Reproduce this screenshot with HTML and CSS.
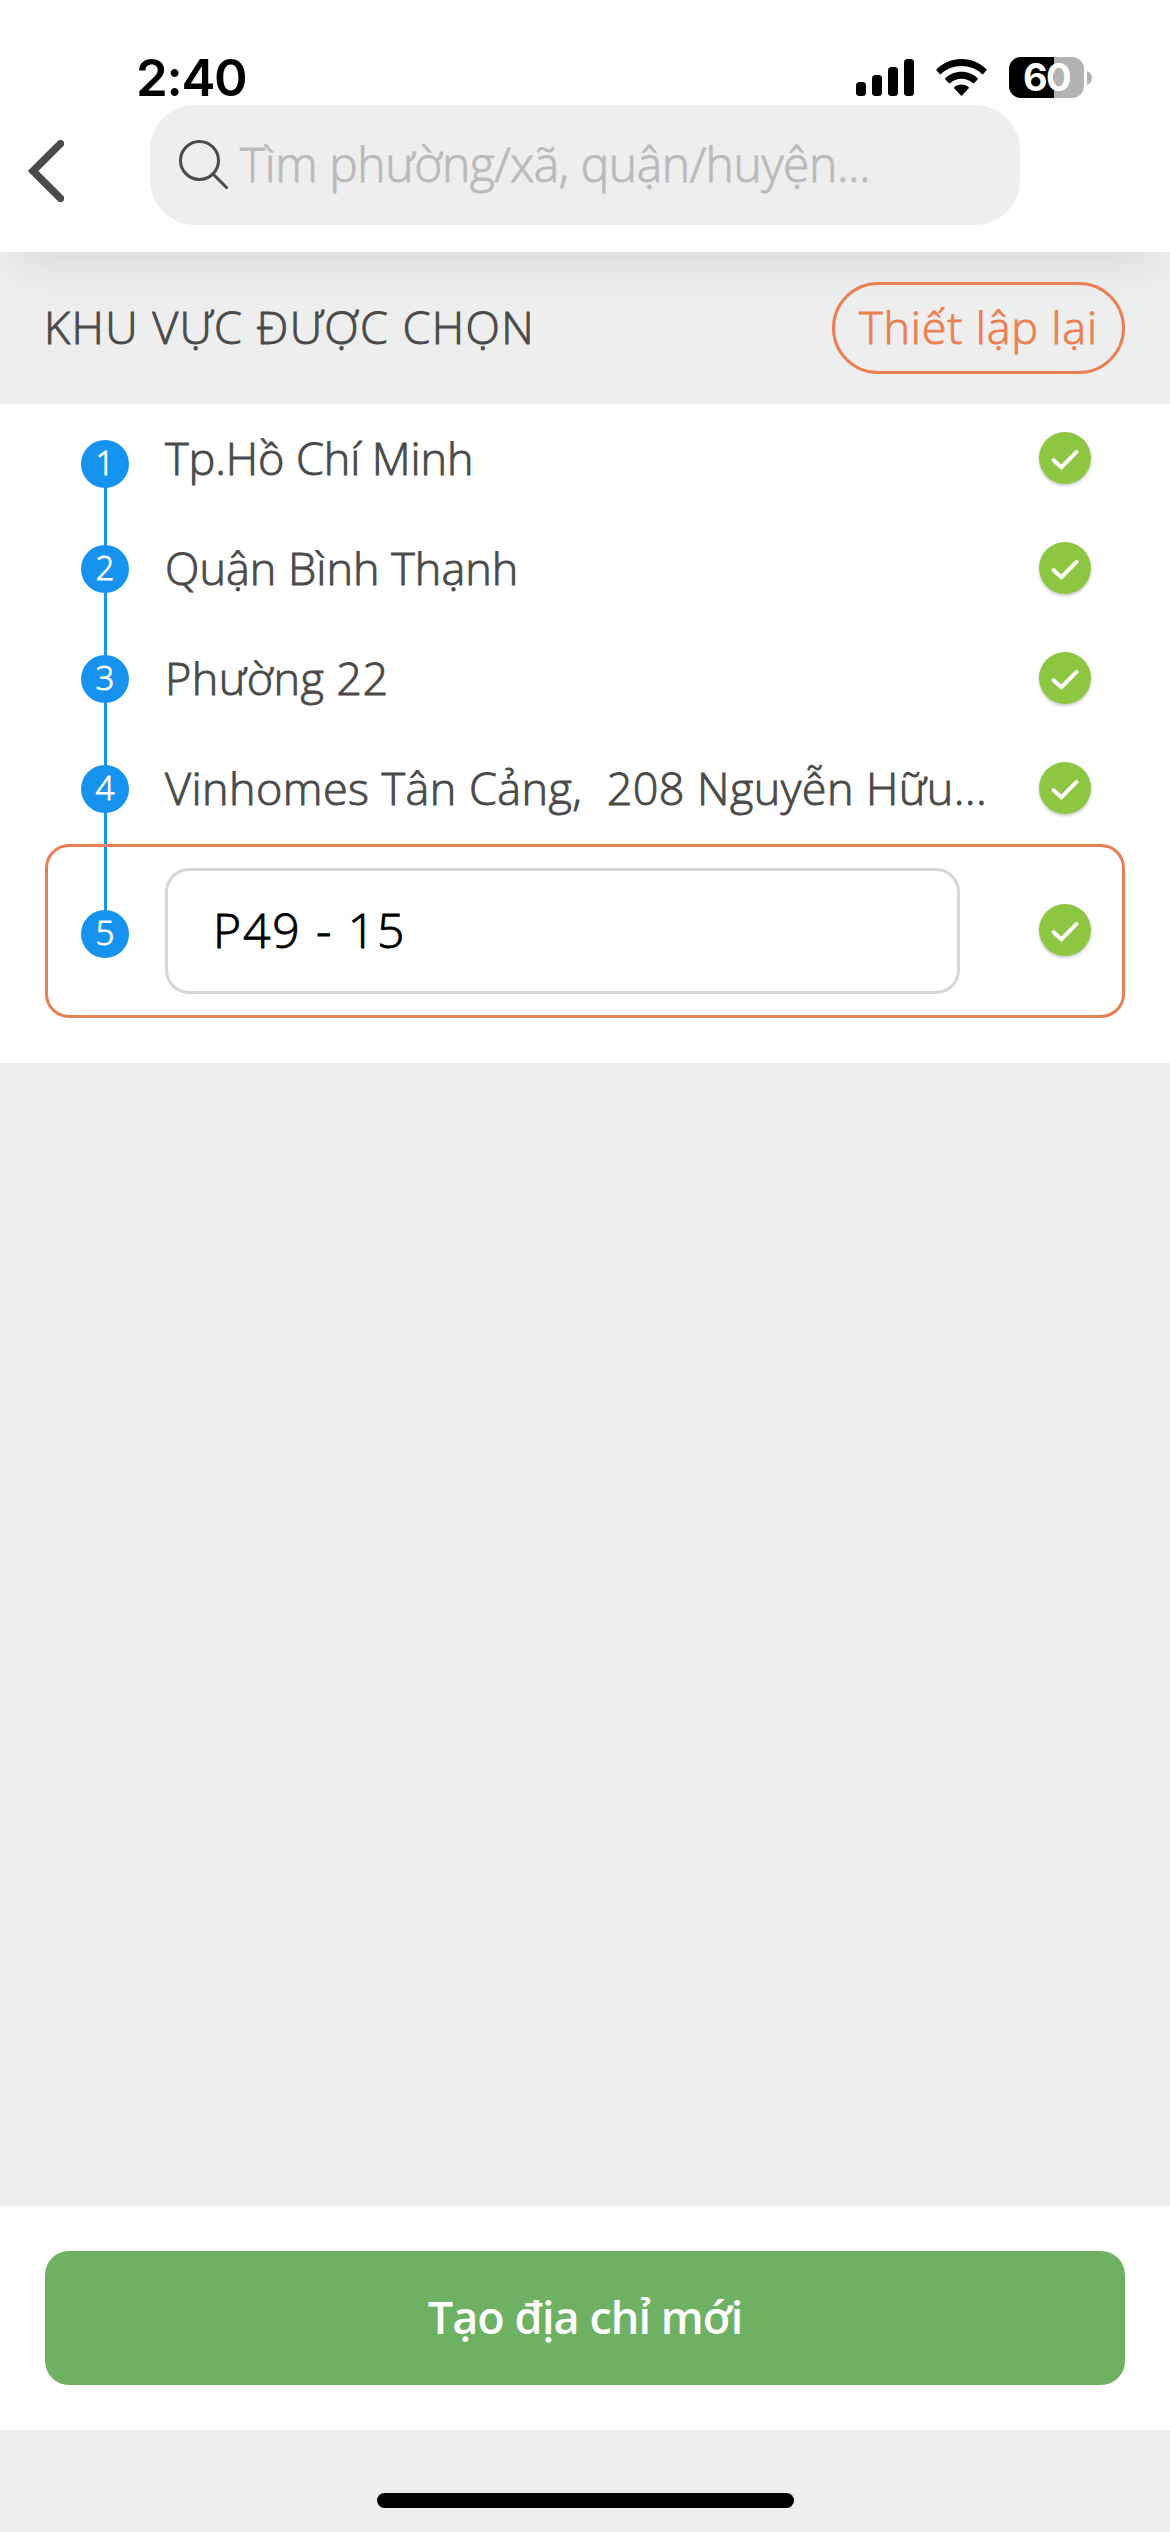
FILE: index.html
```html
<!DOCTYPE html>
<html lang="vi">
<head>
<meta charset="utf-8">
<title>Chọn khu vực</title>
<link rel="stylesheet" href="styles.css">
</head>
<body>
<svg class="sprite" aria-hidden="true">
  <symbol id="check" viewBox="0 0 52 52">
    <path d="M14.6 28.2L22.4 35.2L37.6 19.8" fill="none" stroke="#fff" stroke-width="4" stroke-linecap="round"/>
  </symbol>
</svg>
<div class="screen">
  <header class="header">
    <div class="status">
      <span class="time">2:40</span>
      <div class="indicators">
        <svg class="signal" viewBox="0 0 58 37">
          <rect x="0" y="23" width="10" height="14" rx="3.5"/>
          <rect x="16" y="16" width="10" height="21" rx="3.5"/>
          <rect x="32" y="8" width="10" height="29" rx="3.5"/>
          <rect x="48" y="0" width="10" height="37" rx="3.5"/>
        </svg>
        <svg class="wifi" viewBox="0 0 51 37">
          <path d="M25.5 0C35.3 0 44.2 3.800 50.400 10.200Q51 10.900 50.400 11.600L47.200 14.900Q46.500 15.500 45.800 14.900C40.500 9.800 33.300 7 25.500 7S10.500 9.800 5.200 14.900Q4.500 15.500 3.800 14.900L.6 11.600Q0 10.900 .6 10.200C6.800 3.800 15.700 0 25.500 0Z"/>
          <path d="M25.500 12.700C31.900 12.700 37.600 15.200 41.600 19.200Q42.300 19.900 41.600 20.600L38.200 24Q37.500 24.600 36.800 24C33.800 21.300 29.900 19.700 25.500 19.700S17.200 21.300 14.200 24Q13.500 24.600 12.800 24L9.400 20.600Q8.700 19.900 9.400 19.200C13.400 15.200 19.100 12.700 25.500 12.700Z"/>
          <path d="M25.500 25.400C28.300 25.400 30.800 26.400 32.600 28Q33.300 28.700 32.600 29.400L26.300 36.300Q25.500 37 24.700 36.300L18.400 29.400Q17.700 28.700 18.400 28C20.200 26.400 22.700 25.400 25.500 25.400Z"/>
        </svg>
        <div class="battery">
          <span class="charge">60</span>
          <svg class="tip" viewBox="0 0 5 14"><path d="M0 0Q5 2 5 7T0 14Z"/></svg>
        </div>
      </div>
    </div>
    <div class="nav">
      <svg class="back" viewBox="0 0 36 62"><path d="M32.500 3.700L5 31L32.500 58.300"/></svg>
      <div class="search">
        <svg class="lens" viewBox="0 0 50 50"><circle cx="20.500" cy="20.500" r="19"/><path d="M34 34L47.500 47.500"/></svg>
        <span class="placeholder">Tìm phường/xã, quận/huyện...</span>
      </div>
    </div>
  </header>

  <section class="heading">
    <h1 class="title">KHU VỰC ĐƯỢC CHỌN</h1>
    <button class="reset"><span>Thiết lập lại</span></button>
  </section>

  <main class="list">
    <div class="row row-first">
      <span class="step">1</span>
      <span class="name name-city">Tp.Hồ Chí Minh</span>
      <svg class="done"><use href="#check"/></svg>
    </div>
    <div class="row">
      <span class="step">2</span>
      <span class="name name-district">Quận Bình Thạnh</span>
      <svg class="done"><use href="#check"/></svg>
    </div>
    <div class="row">
      <span class="step">3</span>
      <span class="name">Phường 22</span>
      <svg class="done"><use href="#check"/></svg>
    </div>
    <div class="row">
      <span class="step">4</span>
      <span class="name">Vinhomes Tân Cảng,  208 Nguyễn Hữu...</span>
      <svg class="done"><use href="#check"/></svg>
    </div>
    <div class="row row-edit">
      <span class="step step-last">5</span>
      <div class="field"><span>P49 - 15</span></div>
      <svg class="done"><use href="#check"/></svg>
    </div>
  </main>

  <div class="space"></div>

  <footer class="footer">
    <button class="submit"><span>Tạo địa chỉ mới</span></button>
  </footer>
  <div class="home"><div class="home-bar"></div></div>
</div>
</body>
</html>
```
FILE: styles.css
```css
* { box-sizing: border-box; }

body {
  margin: 0;
  background: #eee;
  color: #4a4a4a;
  font-family: "Open Sans", "Noto Sans", sans-serif;
  font-size: 45px;
  font-weight: 300;
  line-height: 60px;
  -webkit-text-stroke: .9px currentColor;
}

button {
  font: inherit;
  background: none;
  cursor: pointer;
}

.sprite {
  position: absolute;
  width: 0;
  height: 0;
}

.screen {
  display: flex;
  flex-direction: column;
  width: 1170px;
  height: 2532px;
  overflow: hidden;
}

/* Header */
.header {
  flex: none;
  height: 252px;
  background: #fff;
  box-shadow: 0 30px 36px -15px rgba(0, 0, 0, .08);
}

.status {
  display: flex;
  align-items: center;
  justify-content: space-between;
  height: 105px;
  padding: 50px 78px 0 136px;
  -webkit-text-stroke: 0;
}

.time {
  color: #000;
  font: 600 51px/55px Inter, sans-serif;
  letter-spacing: -1.33px;
}

.indicators {
  display: flex;
  align-items: center;
}

.signal {
  width: 58px;
  height: 37px;
  margin-right: 22px;
}

.wifi {
  width: 51px;
  height: 37px;
  margin-right: 22px;
}

.battery {
  display: flex;
  align-items: center;
  gap: 3px;
  width: 83px;
}

.charge {
  width: 75px;
  height: 41px;
  border-radius: 12px;
  background: linear-gradient(90deg, #000 45px, #b3b3b3 45px);
  color: #fff;
  font: 700 38px/41px Inter, sans-serif;
  letter-spacing: -1.6px;
  text-align: center;
}

.tip {
  width: 5px;
  height: 14px;
  fill: #b3b3b3;
}

.nav {
  display: flex;
  align-items: flex-start;
  height: 147px;
  padding-left: 28px;
}

.back {
  width: 36px;
  height: 62px;
  margin: 35px 86px 0 0;
  fill: none;
  stroke: #4a4a4a;
  stroke-width: 7.500;
  stroke-linecap: round;
}

.search {
  display: flex;
  align-items: center;
  width: 870px;
  height: 120px;
  padding-left: 29px;
  border-radius: 45px;
  background: #eee;
}

.lens {
  width: 50px;
  height: 50px;
  margin-right: 11px;
  fill: none;
  stroke: #4a4a4a;
  stroke-width: 3;
  stroke-linecap: round;
}

.placeholder {
  padding-bottom: 3px;
  color: #bababa;
  font-size: 48px;
  letter-spacing: -.42px;
  white-space: nowrap;
}

/* Section heading */
.heading {
  display: flex;
  flex: none;
  align-items: center;
  justify-content: space-between;
  height: 152px;
  padding: 0 45px 0 44px;
}

.title {
  margin: 0;
  padding-bottom: 3px;
  font-size: 45px;
  font-weight: 300;
  letter-spacing: 1.4px;
}

.reset {
  display: flex;
  align-items: center;
  justify-content: center;
  width: 293px;
  height: 92px;
  padding: 0 0 3px;
  border: 3px solid #ec7f52;
  border-radius: 46px;
  color: #ec7f52;
  letter-spacing: .8px;
}

/* Selected areas */
.list {
  flex: none;
  padding: 0 45px 45px;
  background: #fff;
}

.row {
  position: relative;
  display: flex;
  align-items: center;
  height: 110px;
  padding: 0 34px 0 36px;
}

.step {
  flex: none;
  width: 48px;
  height: 48px;
  margin-right: 36px;
  border-radius: 50%;
  background: #1593ee;
  color: #fff;
  font-size: 33px;
  line-height: 46px;
  text-align: center;
}

.row-first .step { margin-top: 10px; }

/* Connector from each step down to the next one */
.row:not(.row-edit)::after {
  content: "";
  position: absolute;
  top: 78px;
  left: 59px;
  width: 3px;
  height: 70px;
  background: #1593ee;
}

.row:nth-child(4)::after { height: 32px; }

.row-edit::before {
  content: "";
  position: absolute;
  top: 0;
  left: 56px;
  width: 3px;
  height: 66px;
  background: #1593ee;
}

.name {
  flex: 1;
  padding-bottom: 3px;
  letter-spacing: .42px;
  white-space: pre;
}

.name-city { letter-spacing: -.11px; }
.name-district { letter-spacing: 0; }

.done {
  flex: none;
  width: 52px;
  height: 52px;
  margin-bottom: 2px;
  border-radius: 50%;
  background: #8dc641;
  box-shadow: 0 2px 3px rgba(0, 0, 0, .2);
}

.row-edit {
  height: 174px;
  padding: 0 31px 0 33px;
  border: 3px solid #e67f54;
  border-radius: 24px;
}

.step-last { margin-top: 6px; }

.field {
  display: flex;
  align-items: center;
  width: 795px;
  height: 126px;
  margin-right: auto;
  padding: 0 0 3px 45px;
  border: 3px solid #d6d6d6;
  border-radius: 24px;
  color: #000;
  font-size: 48px;
  letter-spacing: 1.9px;
}

.space { flex: 1; }

/* Footer */
.footer {
  flex: none;
  height: 224px;
  padding: 45px;
  background: #fff;
}

.submit {
  width: 100%;
  height: 134px;
  padding: 0 0 3px;
  border: 0;
  border-radius: 24px;
  background: #6eb162;
  color: #fff;
  font-weight: 600;
  letter-spacing: -.97px;
  -webkit-text-stroke: 0;
}

.home {
  display: flex;
  flex: none;
  justify-content: center;
  height: 102px;
  padding-top: 63px;
}

.home-bar {
  width: 417px;
  height: 15px;
  border-radius: 8px;
  background: #000;
}
```
